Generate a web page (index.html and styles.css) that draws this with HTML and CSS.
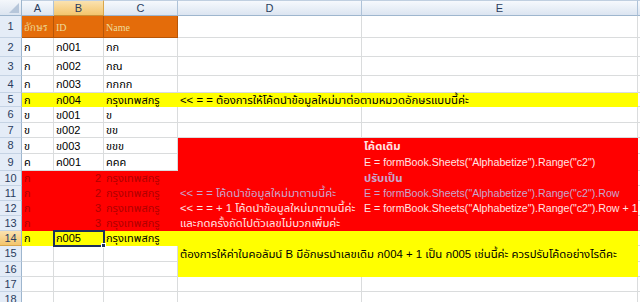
FILE: index.html
```html
<!DOCTYPE html>
<html>
<head>
<meta charset="utf-8">
<link rel="stylesheet" href="styles.css">
</head>
<body>
<div class="sheet">
  <div class="corner"><span class="tri"></span></div>
  <div class="ch">A</div>
  <div class="ch sel">B</div>
  <div class="ch">C</div>
  <div class="ch">D</div>
  <div class="ch">E</div>
  <div class="ch last"></div>

  <div class="rh">1</div>
  <div class="c org hd">อักษร</div>
  <div class="c org hd">ID</div>
  <div class="c org hd">Name</div>
  <div class="c"></div>
  <div class="c"></div>
  <div class="c last"></div>

  <div class="rh">2</div>
  <div class="c">ก</div>
  <div class="c">ก001</div>
  <div class="c">กก</div>
  <div class="c"></div>
  <div class="c"></div>
  <div class="c last"></div>

  <div class="rh">3</div>
  <div class="c">ก</div>
  <div class="c">ก002</div>
  <div class="c">กณ</div>
  <div class="c"></div>
  <div class="c"></div>
  <div class="c last"></div>

  <div class="rh">4</div>
  <div class="c">ก</div>
  <div class="c">ก003</div>
  <div class="c">กกกก</div>
  <div class="c"></div>
  <div class="c"></div>
  <div class="c last"></div>

  <div class="rh">5</div>
  <div class="c yel">ก</div>
  <div class="c yel">ก004</div>
  <div class="c yel">กรุงเทพสกรู</div>
  <div class="c yel span2 th">&lt;&lt; = = ต้องการให้โค้ดนำข้อมูลใหม่มาต่อตามหมวดอักษรแบบนี้ค่ะ</div>
  <div class="c last"></div>

  <div class="rh">6</div>
  <div class="c">ข</div>
  <div class="c">ข001</div>
  <div class="c">ข</div>
  <div class="c"></div>
  <div class="c"></div>
  <div class="c last"></div>

  <div class="rh">7</div>
  <div class="c">ข</div>
  <div class="c">ข002</div>
  <div class="c">ขข</div>
  <div class="c"></div>
  <div class="c"></div>
  <div class="c last"></div>

  <div class="rh">8</div>
  <div class="c">ข</div>
  <div class="c">ข003</div>
  <div class="c">ขขข</div>
  <div class="c red"></div>
  <div class="c red wt b th">โค้ดเดิม</div>
  <div class="c last"></div>

  <div class="rh">9</div>
  <div class="c">ค</div>
  <div class="c">ค001</div>
  <div class="c">คคค</div>
  <div class="c red"></div>
  <div class="c red wt code">E = formBook.Sheets("Alphabetize").Range("c2")</div>
  <div class="c last"></div>

  <div class="rh">10</div>
  <div class="c red dk">ก</div>
  <div class="c red dk num">2</div>
  <div class="c red dk">กรุงเทพสกรู</div>
  <div class="c red"></div>
  <div class="c red lv b th">ปรับเป็น</div>
  <div class="c last"></div>

  <div class="rh">11</div>
  <div class="c red dk">ก</div>
  <div class="c red dk num">2</div>
  <div class="c red dk">กรุงเทพสกรู</div>
  <div class="c red lv th">&lt;&lt; = = โค้ดนำข้อมูลใหม่มาตามนี้ค่ะ</div>
  <div class="c red lv code">E = formBook.Sheets("Alphabetize").Range("c2").Row</div>
  <div class="c last"></div>

  <div class="rh">12</div>
  <div class="c red dk">ก</div>
  <div class="c red dk num">3</div>
  <div class="c red dk">กรุงเทพสกรู</div>
  <div class="c red wt th">&lt;&lt; = = + 1 โค้ดนำข้อมูลใหม่มาตามนี้ค่ะ</div>
  <div class="c red wt code">E = formBook.Sheets("Alphabetize").Range("c2").Row + 1</div>
  <div class="c last"></div>

  <div class="rh">13</div>
  <div class="c red dk">ก</div>
  <div class="c red dk num">3</div>
  <div class="c red dk">กรุงเทพสกรู</div>
  <div class="c red wt th">และกดครั้งถัดไปตัวเลขไม่บวกเพิ่มค่ะ</div>
  <div class="c red"></div>
  <div class="c last"></div>

  <div class="rh sel">14</div>
  <div class="c yel">ก</div>
  <div class="c yel active">ก005<span class="handle"></span></div>
  <div class="c yel">กรุงเทพสกรู</div>
  <div class="c yel merged th">ต้องการให้ค่าในคอลัมน์ B มีอักษรนำเลขเดิม ก004 + 1 เป็น ก005 เช่นนี้ค่ะ ควรปรับโค้ดอย่างไรดีคะ</div>
  <div class="c last"></div>

  <div class="rh">15</div>
  <div class="c"></div>
  <div class="c"></div>
  <div class="c"></div>
  <div class="c last"></div>

  <div class="rh">16</div>
  <div class="c"></div>
  <div class="c"></div>
  <div class="c"></div>
  <div class="c last"></div>

  <div class="rh">17</div>
  <div class="c"></div>
  <div class="c"></div>
  <div class="c"></div>
  <div class="c"></div>
  <div class="c"></div>
  <div class="c last"></div>

  <div class="rh">18</div>
  <div class="c"></div>
  <div class="c"></div>
  <div class="c"></div>
  <div class="c"></div>
  <div class="c"></div>
  <div class="c last"></div>
</div>
</body>
</html>
```

FILE: styles.css
```css
* { box-sizing: border-box; }
html, body { margin: 0; padding: 0; background: #ffffff; }
body {
  width: 640px;
  height: 302px;
  overflow: hidden;
  font-family: "Liberation Sans", "Noto Sans Thai", "Noto Sans", sans-serif;
  font-size: 11px;
  color: #000;
}
.sheet {
  display: grid;
  grid-template-columns: 22px 32px 50px 74px 184px 276px 2px;
  grid-template-rows: 16px 22px 19px 19px 17px 14px 16px 15px 16px 17px 15px 15px 15px 15px 15px 16px 15px 15px 15px;
  width: 640px;
}
.corner {
  position: relative;
  background: linear-gradient(#f4f7fb, #dbe4f0);
  border-right: 1px solid #9eb6ce;
  border-bottom: 1px solid #9eb6ce;
}
.tri {
  position: absolute;
  right: 2px;
  bottom: 2px;
  width: 0;
  height: 0;
  border-left: 10px solid transparent;
  border-bottom: 10px solid #b6c6da;
}
.ch {
  display: flex;
  align-items: center;
  justify-content: center;
  background: linear-gradient(#f6f9fd, #dce5f1);
  border-right: 1px solid #aec2d8;
  border-bottom: 1px solid #9eb6ce;
  border-top: 1px solid #c0cfe0;
  color: #2a3d5e;
  font-size: 11px;
}
.ch.last { border-right: 0; }
.ch.sel {
  background: linear-gradient(#fae2b0, #f3c56c);
  border-right-color: #d9a64a;
  border-bottom-color: #c8913a;
}
.rh {
  display: flex;
  align-items: center;
  justify-content: center;
  background: #e4ecf7;
  border-right: 1px solid #9eb6ce;
  border-bottom: 1px solid #c5d3e4;
  color: #2a3d5e;
  font-size: 11px;
  line-height: 13px;
}
.rh.sel {
  background: linear-gradient(#fae2b0, #f3c56c);
  border-bottom-color: #d9a64a;
}
.c {
  display: flex;
  align-items: center;
  padding: 1px 2px 0 2px;
  white-space: nowrap;
  border-right: 1px solid #dadcdd;
  border-bottom: 1px solid #dadcdd;
  background: #ffffff;
  line-height: 13px;
}
.c.last { border-right: 0; }
.th { font-size: 11.35px; }
.code { font-size: 10.65px; }
.org {
  background: #e46c0a;
  border-color: #b75608;
  color: #eedc9a;
  font-family: "Liberation Serif", "Noto Serif Thai", serif;
  font-size: 10px;
}
.yel { background: #ffff00; border-color: #ffff00; }
.red { background: #ff0000; border-color: #ff0000; }
.dk { color: #b00000; }
.wt { color: #ffe4e4; }
.lv { color: #c9a6cc; }
.b { font-weight: bold; }
.num { justify-content: flex-end; }
.span2 { grid-column: span 2; }
.merged {
  grid-column: span 2;
  grid-row: span 3;
  padding-top: 2px;
}
.active {
  position: relative;
  outline: 2px solid #1d2f5c;
  outline-offset: -1px;
  z-index: 2;
}
.handle {
  position: absolute;
  right: -3px;
  bottom: -3px;
  width: 5px;
  height: 5px;
  background: #1d2f5c;
  border: 1px solid #ffffff;
}
```
